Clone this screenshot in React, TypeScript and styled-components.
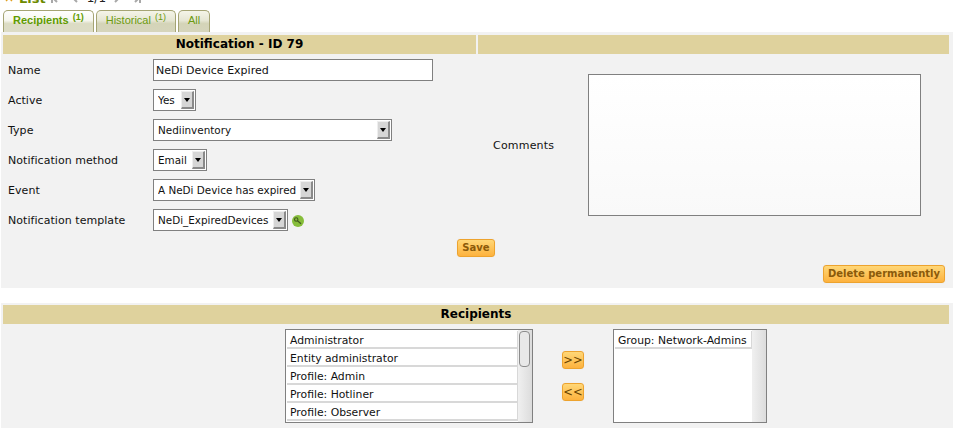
import React from "react";
import styled, { createGlobalStyle } from "styled-components";

const Global = createGlobalStyle`
  html, body { margin: 0; padding: 0; background: #fff; overflow: hidden; }
  body { font-family: "DejaVu Sans", sans-serif; font-size: 11px; color: #111; }
`;
const Page = styled.div`width: 953px; height: 435px; overflow: hidden;`;
const Crumb = styled.div`height: 10px; overflow: hidden; padding-left: 5px;`;
const CrumbInner = styled.div`
  display: flex; align-items: center; height: 16px; margin-top: -10px;
`;
const ListLink = styled.b`color: #6d8a00; font-size: 13px; margin: 0 5px 0 6px;`;
const PagerIcon = styled.svg`margin-right: 7px; flex-shrink: 0;`;
const Count = styled.span`color: #222; font-size: 12px; margin: 0 6px 0 0;`;
const Tabs = styled.div`display: flex; gap: 2px; padding-left: 3px; height: 22px;`;
const Tab = styled.div<{ $active?: boolean }>`
  box-sizing: border-box; height: 22px; padding: 0 9px;
  border: 1px solid #a5a474; border-bottom: 0; border-radius: 5px 5px 0 0;
  background: ${p => p.$active
    ? "linear-gradient(#fff 0, #f6f6ee 45%, #dcdcc4 60%, #dddcc6 100%)"
    : "linear-gradient(#f4f4e8 0, #e6e6d4 45%, #d4d4b8 60%, #d6d5bc 100%)"};
  color: ${p => (p.$active ? "#5f9b00" : "#6c9a10")};
  font-family: "Liberation Sans", sans-serif; font-size: 11px; line-height: 19px;
  font-weight: ${p => (p.$active ? 700 : 400)}; white-space: nowrap;
`;
const Sup = styled.sup`font-size: 9px; line-height: 0; vertical-align: 4px; margin-left: 1px;`;
const Panel = styled.div`
  box-sizing: border-box; height: 256px; margin-left: 1px; padding: 3px 0 0 2px; background: #f2f2f2;
`;
const HeaderRow = styled.div`display: flex; gap: 2px; width: 946px;`;
const Band = styled.div<{ $w?: number }>`
  ${p => (p.$w ? `width: ${p.$w}px;` : "flex: 1;")}
  height: 19px; background: #dfd29d; text-align: center; font-weight: 700; font-size: 12px; line-height: 19px; color: #000;
`;
const Body = styled.div`display: flex;`;
const FormCol = styled.div`
  width: 473px; padding: 5px 0 0 5px; box-sizing: border-box;
  display: flex; flex-direction: column; gap: 8px;
`;
const Row = styled.div`display: flex; align-items: center; height: 22px;`;
const Label = styled.div`width: 145px; flex-shrink: 0; letter-spacing: 0.05px;`;
const TextField = styled.input`
  box-sizing: border-box; width: 280px; height: 22px; padding: 0 2px; border: 1px solid #808080; background: #fff;
  font: 11px "DejaVu Sans", sans-serif; color: #111; outline: none;
`;
const SelectBox = styled.div<{ $w: number }>`
  box-sizing: border-box; width: ${p => p.$w}px; height: 22px; border: 1px solid #808080; background: #fff;
  display: flex; align-items: stretch; padding-left: 4px; line-height: 20px; white-space: nowrap; font-size: 10.4px;
`;
const SelectText = styled.span`flex: 1; overflow: hidden;`;
const Arrow = styled.span`
  width: 13px; box-sizing: border-box; background: #d6d6d6; margin: 1px;
  border-right: 2px solid #8a8a8a; border-bottom: 2px solid #8a8a8a; border-left: 1px solid #eee; border-top: 1px solid #eee;
  display: flex; align-items: center; justify-content: center;
  &::after { content: ""; border: 3.5px solid transparent; border-top: 4px solid #000; border-bottom: 0; }
`;
const KeyIcon = styled.svg`margin-left: 4px; margin-top: 2px; flex-shrink: 0;`;
const CommentsCol = styled.div`flex: 1; display: flex; align-items: center; padding: 20px 0 0 17px; height: 142px;`;
const CommentsLabel = styled.div`width: 95px; letter-spacing: 0.2px;`;
const Comments = styled.div`
  box-sizing: border-box; width: 333px; height: 142px; border: 1px solid #808080; background: linear-gradient(#fff, #f9f9f9);
`;
const Btn = styled.button`
  box-sizing: border-box; height: 18px; padding: 0 4px; border: 1px solid #eda32e; border-radius: 3px;
  background: linear-gradient(#ffd777, #fdb23e); color: #8b5a0a; font: 700 10px/14px "DejaVu Sans", sans-serif;
  box-shadow: 0 0 1px #ddd; white-space: nowrap;
`;
const SaveRow = styled.div`display: flex; justify-content: center; width: 946px; margin-top: 8px;`;
const DeleteRow = styled.div`display: flex; justify-content: flex-end; width: 942px; margin-top: 8px;`;
const Gap = styled.div`height: 15px;`;
const Section = styled.div`
  box-sizing: border-box; height: 125px; margin-left: 1px; padding: 2px 0 0 2px; background: #f2f2f2;
`;
const Dual = styled.div`display: flex; padding: 5px 0 0 282px; align-items: flex-start;`;
const ListBox = styled.div<{ $w: number }>`
  box-sizing: border-box; width: ${p => p.$w}px; height: 94px; border: 1px solid #808080; background: #fff;
  display: flex; overflow: hidden;
`;
const Options = styled.div`flex: 1; min-width: 0; padding: 1px 0 0 1px;`;
const Option = styled.div`
  box-sizing: border-box; height: 18px; padding: 2px 0 0 3px; line-height: 16px; font-size: 10.8px;
  border-bottom: 2px solid #d8d8d8; border-right: 1px solid #d8d8d8; background: #fff; white-space: nowrap;
`;
const Track = styled.div`
  width: 14px; flex-shrink: 0; background: linear-gradient(90deg, #f0f0f0, #dcdcdc); padding: 1px 0 0 1px; box-sizing: border-box;
`;
const Thumb = styled.div`
  width: 9px; height: 34px; margin-left: 0; border: 1px solid #8c8c8c; border-radius: 4px; background: #e8e8e8;
`;
const Moves = styled.div`
  width: 80px; display: flex; flex-direction: column; align-items: center; gap: 14px; padding: 22px 0 0 0; flex-shrink: 0;
`;
const MoveBtn = styled(Btn)`width: 22px; padding: 0; font-weight: 400; color: #6a4300; font-size: 11.5px;`;

const ArrowGlyph = ({ w, flip, bar }: { w: number; flip?: boolean; bar?: boolean }) => (
  <PagerIcon width={w} height="10" viewBox={`0 0 ${w} 10`}>
    <g transform={flip ? `translate(${w} 0) scale(-1 1)` : undefined} stroke="#a8a8a8" strokeWidth="2" fill="none">
      <path d={`M2 5H${w}M6 1L2 5l4 4`} />
      {bar && <path d="M1 0v10" />}
    </g>
  </PagerIcon>
);

export default function App() {
  return (
    <Page>
      <Global />
      <Crumb>
        <CrumbInner>
          <svg width="8" height="8" viewBox="0 0 8 8"><path d="M1 1l6 6M7 1L1 7" stroke="#e0a020" strokeWidth="1.4" /></svg>
          <ListLink>List</ListLink>
          <ArrowGlyph w={13} bar />
          <ArrowGlyph w={9} />
          <Count>1/1</Count>
          <ArrowGlyph w={9} flip />
          <ArrowGlyph w={13} flip bar />
        </CrumbInner>
      </Crumb>
      <Tabs>
        <Tab $active>Recipients <Sup>(1)</Sup></Tab>
        <Tab>Historical <Sup>(1)</Sup></Tab>
        <Tab>All</Tab>
      </Tabs>
      <Panel>
        <HeaderRow>
          <Band $w={473}>Notification - ID 79</Band>
          <Band />
        </HeaderRow>
        <Body>
          <FormCol>
            <Row><Label>Name</Label><TextField readOnly value="NeDi Device Expired" /></Row>
            <Row><Label>Active</Label><SelectBox $w={43}><SelectText>Yes</SelectText><Arrow /></SelectBox></Row>
            <Row><Label>Type</Label><SelectBox $w={239}><SelectText>Nediinventory</SelectText><Arrow /></SelectBox></Row>
            <Row><Label>Notification method</Label><SelectBox $w={54}><SelectText>Email</SelectText><Arrow /></SelectBox></Row>
            <Row><Label>Event</Label><SelectBox $w={162}><SelectText>A NeDi Device has expired</SelectText><Arrow /></SelectBox></Row>
            <Row>
              <Label>Notification template</Label>
              <SelectBox $w={135}><SelectText>NeDi_ExpiredDevices</SelectText><Arrow /></SelectBox>
              <KeyIcon width="12" height="12" viewBox="0 0 12 12">
                <circle cx="6" cy="6" r="6" fill="#86bd3a" />
                <circle cx="4.2" cy="4.5" r="1.7" fill="none" stroke="#41591f" strokeWidth="1.1" />
                <path d="M5.5 5.8l3.5 3" stroke="#41591f" strokeWidth="1.3" />
              </KeyIcon>
            </Row>
          </FormCol>
          <CommentsCol>
            <CommentsLabel>Comments</CommentsLabel>
            <Comments />
          </CommentsCol>
        </Body>
        <SaveRow><Btn>Save</Btn></SaveRow>
        <DeleteRow><Btn>Delete permanently</Btn></DeleteRow>
      </Panel>
      <Gap />
      <Section>
        <HeaderRow><Band>Recipients</Band></HeaderRow>
        <Dual>
          <ListBox $w={248}>
            <Options>
              {["Administrator", "Entity administrator", "Profile: Admin", "Profile: Hotliner", "Profile: Observer"].map(o => <Option key={o}>{o}</Option>)}
            </Options>
            <Track><Thumb /></Track>
          </ListBox>
          <Moves>
            <MoveBtn>&gt;&gt;</MoveBtn>
            <MoveBtn>&lt;&lt;</MoveBtn>
          </Moves>
          <ListBox $w={154}>
            <Options><Option>Group: Network-Admins</Option></Options>
            <Track />
          </ListBox>
        </Dual>
      </Section>
    </Page>
  );
}
